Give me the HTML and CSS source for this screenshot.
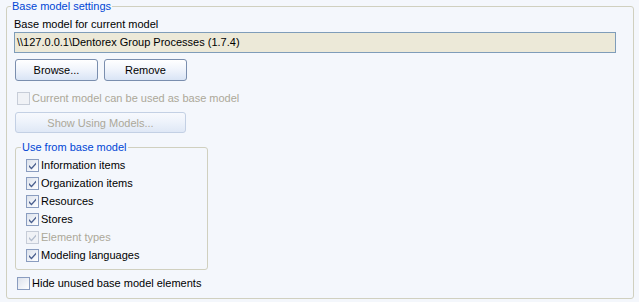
FILE: index.html
```html
<!DOCTYPE html>
<html lang="en">
<head>
    <meta charset="UTF-8">
    <title>Base model settings</title>
    <link rel="stylesheet" href="styles.css">
</head>
<body>
    <fieldset class="group outer">
        <legend class="group-title">Base model settings</legend>

        <div class="field-label">Base model for current model</div>
        <div class="path-box">\\127.0.0.1\Dentorex Group Processes (1.7.4)</div>

        <div class="button-row">
            <button class="xp-button">Browse...</button>
            <button class="xp-button">Remove</button>
        </div>

        <label class="check-row top-check disabled">
            <span class="box"></span>
            Current model can be used as base model
        </label>

        <button class="xp-button wide" disabled>Show Using Models...</button>

        <fieldset class="group inner">
            <legend class="group-title">Use from base model</legend>
            <label class="check-row item">
                <span class="box"><svg viewBox="0 0 11 11"><path d="M2 5 L4.5 7.5 L9 2.5 L9 4.5 L4.5 9.5 L2 7 Z"/></svg></span>
                Information items
            </label>
            <label class="check-row item">
                <span class="box"><svg viewBox="0 0 11 11"><path d="M2 5 L4.5 7.5 L9 2.5 L9 4.5 L4.5 9.5 L2 7 Z"/></svg></span>
                Organization items
            </label>
            <label class="check-row item">
                <span class="box"><svg viewBox="0 0 11 11"><path d="M2 5 L4.5 7.5 L9 2.5 L9 4.5 L4.5 9.5 L2 7 Z"/></svg></span>
                Resources
            </label>
            <label class="check-row item">
                <span class="box"><svg viewBox="0 0 11 11"><path d="M2 5 L4.5 7.5 L9 2.5 L9 4.5 L4.5 9.5 L2 7 Z"/></svg></span>
                Stores
            </label>
            <label class="check-row item disabled">
                <span class="box"><svg viewBox="0 0 11 11"><path d="M2 5 L4.5 7.5 L9 2.5 L9 4.5 L4.5 9.5 L2 7 Z"/></svg></span>
                Element types
            </label>
            <label class="check-row item">
                <span class="box"><svg viewBox="0 0 11 11"><path d="M2 5 L4.5 7.5 L9 2.5 L9 4.5 L4.5 9.5 L2 7 Z"/></svg></span>
                Modeling languages
            </label>
        </fieldset>

        <label class="check-row hide-check">
            <span class="box"></span>
            Hide unused base model elements
        </label>
    </fieldset>
</body>
</html>
```

FILE: styles.css
```css
* {
    margin: 0;
    padding: 0;
    box-sizing: border-box;
}

body {
    background-color: #f4f7fc;
    font-family: 'Liberation Sans', Arial, sans-serif;
    font-size: 11px;
    line-height: 13px;
    color: #000;
    width: 639px;
    height: 302px;
    overflow: hidden;
}

.group {
    border: 1px solid #d0d0bf;
    border-radius: 3px;
    min-width: 0;
}

.group-title {
    color: #0046d5;
    line-height: 13px;
    padding: 0 1px;
    margin-left: -3px;
}

.outer {
    margin: 0 5px 0 6px;
    padding: 0 17px 8px 7px;
}

.field-label {
    margin-top: 5px;
}

.path-box {
    margin-top: 1px;
    height: 21px;
    padding: 3px 2px;
    background-color: #ece9d8;
    border: 1px solid #7f9db9;
    white-space: nowrap;
}

.button-row {
    display: flex;
    gap: 6px;
    margin-top: 6px;
    margin-left: 1px;
}

.xp-button {
    font-family: inherit;
    font-size: 11px;
    color: #000;
    width: 83px;
    height: 22px;
    border: 1px solid #7a8eae;
    border-radius: 3px;
    background: linear-gradient(#ffffff 0%, #f1f5fc 45%, #d9e4f5 100%);
}

.xp-button:disabled {
    color: #aca899;
    border-color: #c3d0e4;
    background: linear-gradient(#f7f9fd 0%, #eef3fb 45%, #dfe8f6 100%);
}

.xp-button.wide {
    display: block;
    width: 171px;
    height: 21px;
    margin: 7px 0 0 1px;
}

.check-row {
    display: flex;
    align-items: center;
    gap: 2px;
    height: 13px;
}

.box {
    width: 13px;
    height: 13px;
    border: 1px solid #8a9dc0;
    background: linear-gradient(135deg, #dce2ec 0%, #f4f6fa 70%, #ffffff 100%);
    display: flex;
    align-items: center;
    justify-content: center;
    flex-shrink: 0;
}

.box svg {
    width: 11px;
    height: 11px;
    fill: #4a5f8e;
}

.disabled {
    color: #aca899;
}

.disabled .box {
    border-color: #c7cdd8;
    background: #f0f2f6;
}

.disabled .box svg {
    fill: #b2bccd;
}

.top-check {
    margin-top: 11px;
    margin-left: 3px;
}

.inner {
    width: 193px;
    margin-top: 8px;
    margin-left: 1px;
    padding: 2px 6px 5px 10px;
}

.inner .group-title {
    margin-left: -5px;
}

.item {
    height: 18px;
}

.hide-check {
    margin-top: 7px;
    margin-left: 3px;
}
```
